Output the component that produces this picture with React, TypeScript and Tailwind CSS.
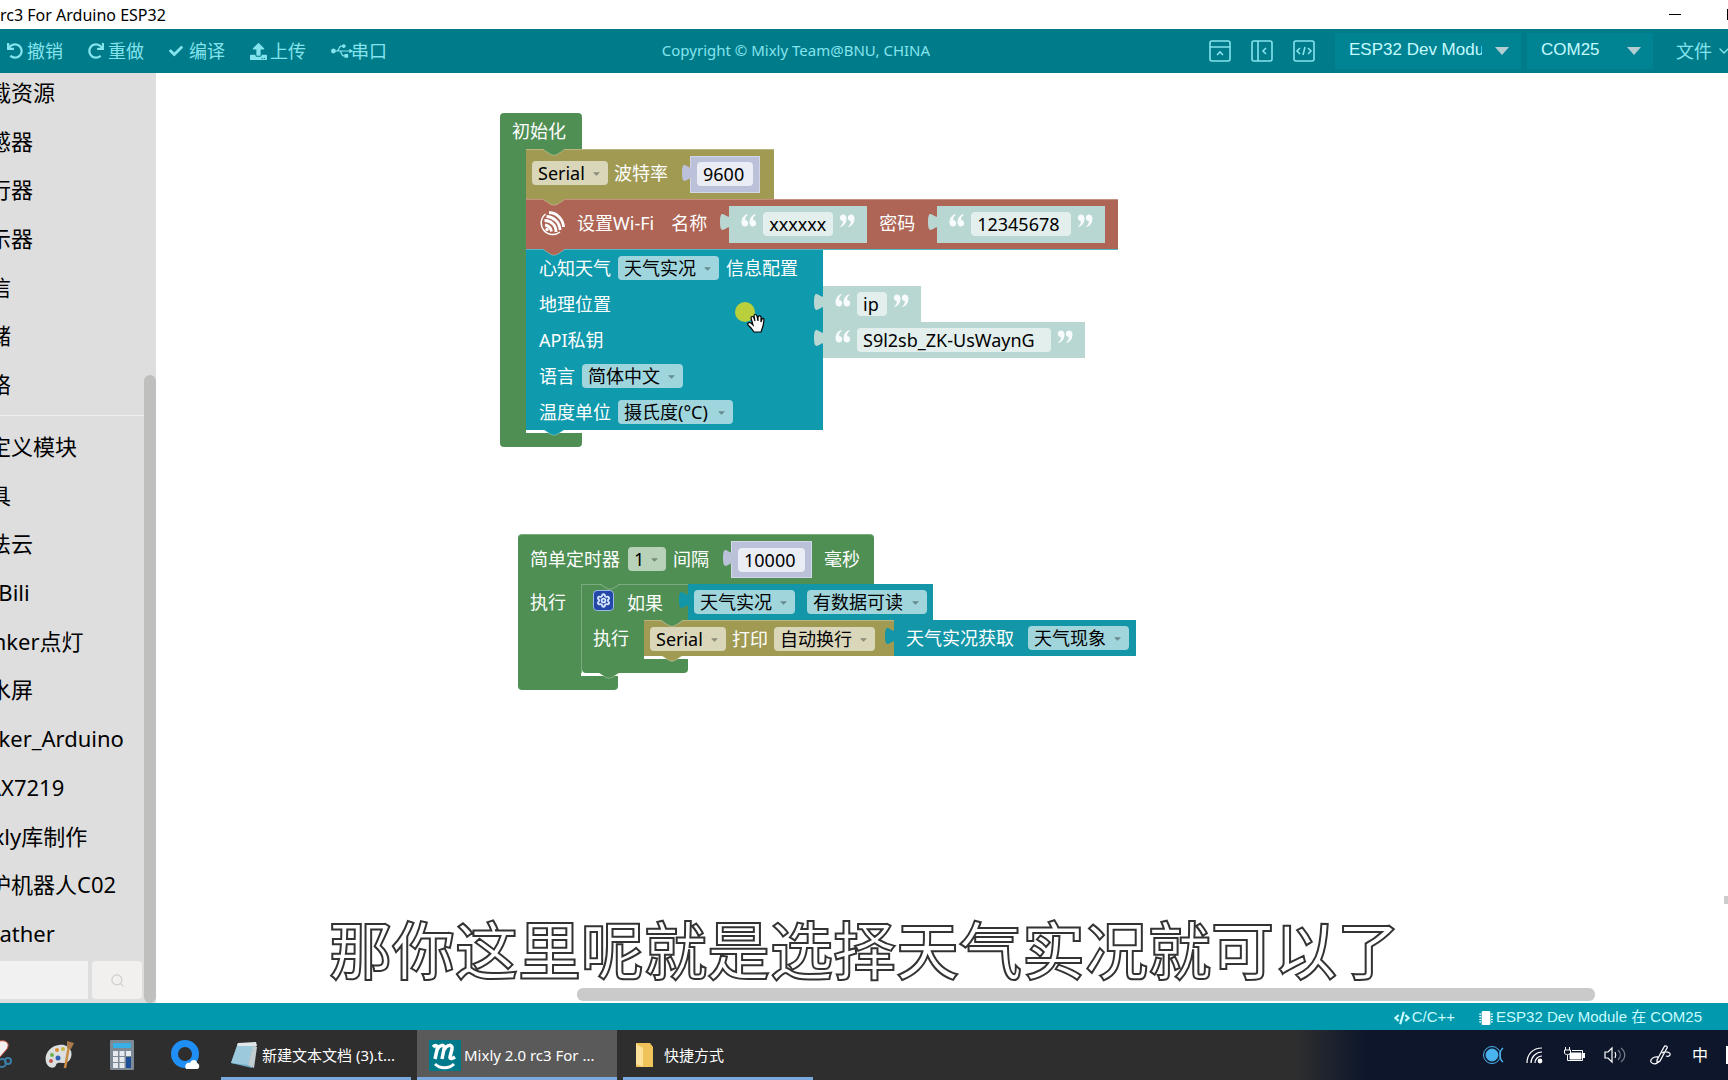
import type { ReactNode } from 'react';
import { FaUndo, FaRedo, FaCheck, FaUpload, FaUsb, FaCaretDown, FaMicrochip, FaCode } from 'react-icons/fa';
import { ChevronDown, Search, Settings } from 'lucide-react';

const toolActions = [
    { label: '撤销', icon: <FaUndo size={16} /> },
    { label: '重做', icon: <FaRedo size={16} /> },
    { label: '编译', icon: <FaCheck size={14} /> },
    { label: '上传', icon: <FaUpload size={17} /> },
    { label: '串口', icon: <FaUsb size={22} /> },
];

const categories = ['下载资源', '传感器', '执行器', '显示器', '通信', '存储', '网络'];

const customCategories = [
    '自定义模块',
    '工具',
    '巴法云',
    'BiliBili',
    'Blinker点灯',
    '墨水屏',
    'Tinker_Arduino',
    'MAX7219',
    'Mixly库制作',
    '守护机器人C02',
    'Weather',
];

export default function App() {
    return (
        <div className="flex h-screen flex-col overflow-hidden bg-white font-['Noto_Sans','Noto_Sans_CJK_SC',sans-serif] text-black">
            <TitleBar />
            <Toolbar />
            <div className="flex min-h-0 flex-1">
                <Sidebar />
                <Workspace />
            </div>
            <StatusBar />
            <Taskbar />
        </div>
    );
}

function TitleBar() {
    return (
        <header className="flex h-[29px] shrink-0 items-center justify-between overflow-hidden">
            <h1 className="text-base">rc3 For Arduino ESP32</h1>
            <div className="flex items-center gap-[46px]">
                <button aria-label="最小化" className="h-px w-3 bg-black" />
                <button aria-label="最大化" className="-mr-[10px] h-[11px] w-[11px] border border-black" />
            </div>
        </header>
    );
}

function Toolbar() {
    return (
        <nav className="flex h-11 shrink-0 items-center overflow-hidden bg-[#007b89] text-[#84e4ee]">
            <div className="flex w-[38.3%] shrink-0 items-center pl-[7px]">
                {toolActions.map((item) => (
                    <button key={item.label} className="flex w-[81px] shrink-0 items-center gap-1 text-lg">
                        <span className="flex w-4 *:shrink-0">{item.icon}</span>
                        <span className="whitespace-nowrap">{item.label}</span>
                    </button>
                ))}
            </div>
            <p className="mb-px text-[15px] whitespace-nowrap">Copyright © Mixly Team@BNU, CHINA</p>
            <div className="flex flex-1 items-center justify-end">
                <div className="mr-5 flex gap-5">
                    <button aria-label="折叠顶部">
                        <PanelIcon>
                            <path d="M1 7h20M8 15l3-3 3 3" />
                        </PanelIcon>
                    </button>
                    <button aria-label="折叠侧栏">
                        <PanelIcon>
                            <path d="M7 1v20M15 8l-3 3 3 3" />
                        </PanelIcon>
                    </button>
                    <button aria-label="查看代码">
                        <PanelIcon>
                            <path d="M7 8l-3 3 3 3M15 8l3 3-3 3M12 7l-2 8" />
                        </PanelIcon>
                    </button>
                </div>
                <ToolSelect label="板卡" value="ESP32 Dev Module" width="w-[186px]" textWidth="w-[147px]" />
                <ToolSelect label="端口" value="COM25" width="w-[126px]" textWidth="w-[90px]" />
                <button className="-mr-1 ml-[17px] flex items-center gap-1 text-lg whitespace-nowrap">
                    文件
                    <ChevronDown size={16} />
                </button>
            </div>
        </nav>
    );
}

function PanelIcon({ children }: { children: ReactNode }) {
    return (
        <svg width="22" height="22" viewBox="0 0 22 22" fill="none" stroke="currentColor" strokeWidth="1.6">
            <rect x="1" y="1" width="20" height="20" rx="2" />
            {children}
        </svg>
    );
}

function ToolSelect({ label, value, width, textWidth }: { label: string; value: string; width: string; textWidth: string }) {
    return (
        <div className={`relative mr-[6px] h-9 shrink-0 bg-[#008494] ${width}`}>
            <select
                aria-label={label}
                className={`h-[34px] appearance-none overflow-hidden pl-[14px] font-['Liberation_Sans',sans-serif] text-[17px] text-clip text-[#c4fbff] ${textWidth}`}
            >
                <option>{value}</option>
            </select>
            <svg className="pointer-events-none absolute top-[14px] right-3" width="14" height="8" viewBox="0 0 14 8">
                <path d="M0 0h14L7 8z" fill="#b4cdd2" />
            </svg>
        </div>
    );
}

function Sidebar() {
    return (
        <aside className="relative flex w-[156px] shrink-0 flex-col overflow-hidden bg-[#dedede]">
            <div className="-mt-[5px] mr-3 flex min-h-0 flex-1 flex-col">
                {categories.map((item) => (
                    <SidebarItem key={item} label={item} />
                ))}
                <hr className="my-[6px] border-[#eeeeee]" />
                {customCategories.map((item) => (
                    <SidebarItem key={item} label={item} />
                ))}
            </div>
            <div className="mt-[3px] mb-1 flex h-[38px] gap-1">
                <input aria-label="搜索模块" className="w-[88px] bg-[#f1f1f1]" />
                <button aria-label="搜索" className="flex w-[50px] items-center justify-center rounded-sm bg-[#f1f0ef] text-[#cfcfcf]">
                    <Search size={15} />
                </button>
            </div>
            <div className="absolute right-0 bottom-0 h-[628px] w-3 rounded-md bg-[#bfbfbd]" />
        </aside>
    );
}

function SidebarItem({ label }: { label: string }) {
    return (
        <button className="-ml-[33px] flex min-h-0 flex-1 items-center text-[22px] whitespace-nowrap">
            {label}
        </button>
    );
}

function Workspace() {
    return (
        <main className="relative min-w-0 flex-1 overflow-hidden text-lg leading-6 text-white">
            <SetupBlock />
            <TimerBlock />

            {/* Mouse pointer */}
            <svg className="absolute top-[228px] left-[578px]" width="36" height="36" viewBox="0 0 36 36">
                <circle cx="11" cy="11" r="10" fill="#b9cf3c" />
                <path
                    d="M20 31l-3-4-3-3c-1-2 1-3 3-2l2 2-2-7c0-2 2-2 3 0l1 3-1-5c0-2 2-2 3 0l1 5 0-4c1-2 3-1 3 0l0 5 1-3c1-1 2-1 2 1l-1 6-2 6z"
                    fill="white"
                    stroke="black"
                    strokeWidth="1.2"
                />
            </svg>

            {/* Subtitle */}
            <p className="absolute bottom-[22px] left-[173px] text-[63px] leading-none font-medium whitespace-nowrap text-white [-webkit-text-stroke:2px_#333333]">
                那你这里呢就是选择天气实况就可以了
            </p>

            <div className="absolute right-[133px] bottom-[2px] left-[421px] h-[13px] rounded-md bg-[#cacaca]" />
            <div className="absolute right-0 bottom-[99px] h-2 w-1 bg-[#cccccc]" />
        </main>
    );
}

/* ---------- Block parts ---------- */

function Notch({ className }: { className: string }) {
    return (
        <svg className={`absolute -top-px left-[18px] z-10 ${className}`} width="20" height="7" viewBox="0 0 20 7">
            <path d="M0 0v1l7 4.500q3 1.500 6 0L20 1V0z" fill="currentColor" />
            <path d="M0 1l7 4.500q3 1.500 6 0L20 1" fill="none" stroke="white" strokeOpacity=".3" />
        </svg>
    );
}

function Value({ children, className }: { children: ReactNode; className: string }) {
    return (
        <div className={`relative flex shrink-0 items-center ${className}`}>
            <svg className="absolute top-[7px] -left-[9px]" width="10" height="18" viewBox="0 0 8 15" preserveAspectRatio="none">
                <path d="M8 0c0 10-8-8-8 7.500s8-2.500 8 7.500z" fill="currentColor" />
            </svg>
            {children}
        </div>
    );
}

function Dropdown({ label, value, width }: { label: string; value: string; width: string }) {
    return (
        <span className={`relative flex h-6 shrink-0 text-black ${width}`}>
            <select aria-label={label} className="h-6 w-full appearance-none rounded bg-white/60 pl-[6px] leading-6">
                <option>{value}</option>
            </select>
            <FaCaretDown className="pointer-events-none absolute top-[7px] right-[6px] text-black/35" size={11} />
        </span>
    );
}

function NumberValue({ label, value, width }: { label: string; value: string; width: string }) {
    return (
        <Value className="mt-[2px] h-[37px] border border-[#d3d6e6] bg-[#bcc1da] px-[6px] text-[#bcc1da]">
            <input aria-label={label} defaultValue={value} className={`h-6 rounded bg-white/70 pl-[6px] text-black ${width}`} />
        </Value>
    );
}

function StringValue({ label, value, width, size }: { label: string; value: string; width: string; size: string }) {
    return (
        <Value className={`gap-[6px] bg-[#b8d6d2] px-3 text-[#b8d6d2] ${size}`}>
            <QuoteMark />
            <input aria-label={label} defaultValue={value} className={`h-6 rounded bg-white/60 pl-[6px] text-black ${width}`} />
            <QuoteMark closing />
        </Value>
    );
}

function QuoteMark({ closing }: { closing?: boolean }) {
    return (
        <svg className={`mb-2 shrink-0 ${closing ? 'rotate-180' : ''}`} width="16" height="13" viewBox="0 0 16 13" fill="white" fillOpacity=".9">
            <path d="M6.500 0C3 1 .5 4 .5 8.500.5 11 2 12.500 4 12.500s3.200-1.400 3.200-3.200S6 6.200 4.200 6.100C4 4 5 2 6.800.8z" />
            <path d="M14.500 0C11 1 8.500 4 8.500 8.500c0 2.500 1.500 4 3.500 4s3.200-1.400 3.200-3.200S14 6.200 12.200 6.100C12 4 13 2 14.800.8z" />
        </svg>
    );
}

// Closing arm of a C-shaped block, with the slit below the last nested block
function BlockFoot({ arm, foot, notch }: { arm: string; foot: string; notch: string }) {
    return (
        <div>
            <div className="flex h-[3px]">
                <div className={`bg-[#4f8f54] ${arm}`} />
                <div className="relative flex-1">
                    <Notch className={notch} />
                </div>
            </div>
            <div className={`h-[14px] rounded-b-sm bg-[#4f8f54] ${foot}`} />
        </div>
    );
}

/* ---------- Stacks on the canvas ---------- */

function SetupBlock() {
    return (
        <section className="absolute top-10 left-[344px]">
            <div className="flex h-9 w-[82px] items-center rounded-t-sm bg-[#4f8f54] pl-3">初始化</div>
            <div className="flex">
                <div className="w-[26px] bg-[#4f8f54]" />
                <div>
                    <div className="relative flex h-[50px] w-[248px] items-center border-t border-[#bab57f] bg-[#a19a53] pb-[3px] pl-[6px]">
                        <Notch className="text-[#4f8f54]" />
                        <Dropdown label="串口" value="Serial" width="w-[76px]" />
                        <span className="mr-[22px] ml-[6px]">波特率</span>
                        <NumberValue label="波特率" value="9600" width="w-14" />
                    </div>
                    <div className="relative flex h-[50px] w-[592px] items-center border-t border-[#c98f83] bg-[#ae6555] pb-[3px] pl-[14px]">
                        <Notch className="text-[#a19a53]" />
                        <EspressifLogo />
                        <span className="ml-3">设置Wi-Fi</span>
                        <span className="mr-[22px] ml-[17px]">名称</span>
                        <StringValue label="名称" value="xxxxxx" width="w-[70px]" size="mt-[2px] h-[37px]" />
                        <span className="mr-[22px] ml-3">密码</span>
                        <StringValue label="密码" value="12345678" width="w-[100px]" size="mt-[2px] h-[37px]" />
                    </div>
                    <div className="relative border-t border-[#57b8c5]">
                        <Notch className="text-[#ae6555]" />
                        <WeatherRow>
                            心知天气
                            <Dropdown label="天气类型" value="天气实况" width="w-[101px]" />
                            信息配置
                        </WeatherRow>
                        <WeatherRow value={<StringValue label="地理位置" value="ip" width="w-[30px]" size="h-9" />}>地理位置</WeatherRow>
                        <WeatherRow value={<StringValue label="API私钥" value="S9l2sb_ZK-UsWaynG" width="w-[194px]" size="h-9" />}>
                            API私钥
                        </WeatherRow>
                        <WeatherRow>
                            语言
                            <Dropdown label="语言" value="简体中文" width="w-[101px]" />
                        </WeatherRow>
                        <WeatherRow>
                            温度单位
                            <Dropdown label="温度单位" value="摄氏度(°C)" width="w-[115px]" />
                        </WeatherRow>
                    </div>
                </div>
            </div>
            <BlockFoot arm="w-[26px]" foot="w-[82px]" notch="text-[#109aad]" />
        </section>
    );
}

function WeatherRow({ children, value }: { children: ReactNode; value?: ReactNode }) {
    return (
        <div className="flex h-9">
            <div className="flex w-[297px] shrink-0 items-center gap-[7px] bg-[#109aad] pl-[13px]">{children}</div>
            {value}
        </div>
    );
}

function TimerBlock() {
    return (
        <section className="absolute top-[461px] left-[362px]">
            <div className="flex h-[50px] w-[356px] items-center rounded-t-sm border-t border-[#7aab7e] bg-[#4f8f54] pb-[2px] pl-3">
                简单定时器
                <span className="mr-[7px] ml-2">
                    <Dropdown label="定时器" value="1" width="w-[38px]" />
                </span>
                间隔
                <span className="mr-3 ml-[22px]">
                    <NumberValue label="间隔" value="10000" width="w-[67px]" />
                </span>
                毫秒
            </div>
            <div className="flex">
                <div className="w-[63px] bg-[#4f8f54] pt-[6px] pl-3">执行</div>
                <div className="border-l border-[#7aab7e]">
                    <div className="relative flex h-9">
                        <Notch className="text-[#4f8f54]" />
                        <div className="flex w-[106px] items-center border-t border-[#7aab7e] bg-[#4f8f54] pl-[11px]">
                            <button
                                aria-label="设置"
                                className="mr-[13px] mb-1 flex size-[21px] items-center justify-center rounded border border-[#9db8e8] bg-[#2448a8] text-[#d5e4ff]"
                            >
                                <Settings size={15} strokeWidth={3} />
                            </button>
                            如果
                        </div>
                        <Value className="h-9 gap-3 bg-[#1296a8] px-[6px] text-[#1296a8]">
                            <Dropdown label="天气类型" value="天气实况" width="w-[101px]" />
                            <Dropdown label="状态" value="有数据可读" width="w-[120px]" />
                        </Value>
                    </div>
                    <div className="flex h-9">
                        <div className="flex w-[62px] items-center bg-[#4f8f54] pl-[11px]">执行</div>
                        <div className="relative flex w-[250px] items-center gap-[6px] border-t border-[#bab57f] bg-[#a19a53] pl-[6px]">
                            <Notch className="text-[#4f8f54]" />
                            <Dropdown label="串口" value="Serial" width="w-[76px]" />
                            打印
                            <Dropdown label="换行" value="自动换行" width="w-[101px]" />
                        </div>
                        <Value className="h-9 gap-[14px] bg-[#1296a8] pr-[7px] pl-3 text-[#1296a8]">
                            <span className="text-white">天气实况获取</span>
                            <Dropdown label="天气数据" value="天气现象" width="w-[101px]" />
                        </Value>
                    </div>
                    <BlockFoot arm="w-[62px]" foot="w-[106px]" notch="text-[#a19a53]" />
                </div>
            </div>
            <BlockFoot arm="w-[63px]" foot="w-[100px]" notch="text-[#4f8f54]" />
        </section>
    );
}

function EspressifLogo() {
    return (
        <svg className="shrink-0" width="25" height="26" viewBox="0 0 25 26" fill="none" stroke="white" strokeWidth="2.800">
            <path d="M5.500 4A11 11 0 1 0 20 22" strokeWidth="1.500" />
            <path d="M9 2.500A15 15 0 0 1 23.500 17" />
            <path d="M6.500 6.500A14 14 0 0 1 20 20" />
            <path d="M4.500 10.500A11 11 0 0 1 16 22" />
            <path d="M5 15A8 8 0 0 1 11.500 21.500" />
            <circle cx="7" cy="19.500" r="1.700" fill="white" stroke="none" />
        </svg>
    );
}

/* ---------- Bottom bars ---------- */

function StatusBar() {
    return (
        <footer className="flex h-[27px] shrink-0 items-center justify-end gap-6 bg-[#0099ad] pt-[2px] pr-[26px] font-['Liberation_Sans','Noto_Sans_CJK_SC',sans-serif] text-[15px] text-[#c9fbff]">
            <span className="flex items-center gap-[2px]">
                <FaCode size={16} />
                C/C++
            </span>
            <span className="flex items-center gap-[3px]">
                <FaMicrochip size={14} className="text-white" />
                ESP32 Dev Module 在 COM25
            </span>
        </footer>
    );
}

function Taskbar() {
    return (
        <footer className="flex h-[50px] shrink-0 justify-between overflow-hidden bg-linear-to-r from-[#2e2e2e] from-75% to-[#0d162b] to-79% text-[15px] text-white">
            <div className="flex">
                <div className="flex items-center">
                    <button aria-label="截图工具" className="w-[29px] overflow-hidden">
                        <svg width="12" height="32" viewBox="0 0 12 32" fill="none">
                            <path d="M-6 4C4-1 11 3 7 10L0 18z" fill="#f1efef" stroke="#c8503f" />
                            <circle cx="2" cy="24" r="4" stroke="#3a7fa8" strokeWidth="2" />
                            <circle cx="8" cy="22" r="3" stroke="#3a7fa8" strokeWidth="2" />
                        </svg>
                    </button>
                    <button aria-label="画图" className="flex w-[62px] justify-center">
                        <svg width="30" height="30" viewBox="0 0 30 30">
                            <path d="M14 5C5 6-1 14 1 22c2 7 9 7 10 3 1-3 4-2 6-2 7 1 11-6 9-12-2-5-7-7-12-6z" fill="#dcdfe0" />
                            <circle cx="7" cy="15" r="2" fill="#6fae4a" />
                            <circle cx="12" cy="10" r="2" fill="#d98b35" />
                            <circle cx="18" cy="9" r="2" fill="#c8b640" />
                            <circle cx="13" cy="18" r="2.500" fill="#2f62b5" />
                            <circle cx="6" cy="21" r="2" fill="#c4574d" />
                            <path d="M24 6l-4 22" stroke="#c98b45" strokeWidth="2.500" />
                            <path d="M22 1l7 2-3 6-4-1z" fill="#a9784b" />
                        </svg>
                    </button>
                    <button aria-label="计算器" className="flex w-[62px] justify-center">
                        <svg width="24" height="30" viewBox="0 0 24 30">
                            <rect width="24" height="30" rx="1" fill="#7d8a96" />
                            <rect x="3" y="3" width="18" height="5" fill="#38b0e6" />
                            <path d="M3 11h5v5H3zM9.500 11h5v5h-5zM16 11h5v5h-5zM3 17h5v5H3zM9.500 17h5v5h-5zM3 23h5v5H3zM9.500 23h5v5h-5z" fill="#e6eaee" />
                            <path d="M16 17h5v11h-5z" fill="#1d4f99" />
                        </svg>
                    </button>
                    <button aria-label="浏览器" className="flex w-16 justify-center">
                        <svg width="30" height="30" viewBox="0 0 30 30">
                            <circle cx="15" cy="14" r="10.500" fill="none" stroke="#1f8ff5" strokeWidth="7" />
                            <path d="M16 29c-2-4 1-7 4-6 1-4 7-4 7 0 3 1 3 6 0 6z" fill="white" />
                        </svg>
                    </button>
                </div>
                <div className="ml-1 flex gap-[6px]">
                    <button className="flex w-[190px] items-center gap-1 border-b-[3px] border-[#79a9dd] pt-[3px] pl-2">
                        <svg width="29" height="28" viewBox="0 0 29 28">
                            <path d="M9 2l18 1-4 24L2 22z" fill="#6fa9c4" />
                            <path d="M9 2l15 2-5 20L2 22z" fill="#9cc9dc" />
                            <path d="M9 2l18-1 1 4-20 0z" fill="#e2e6e8" />
                            <path d="M24 4l4 2-3 21-6-3z" fill="#c2cdd2" />
                        </svg>
                        <span className="whitespace-nowrap">新建文本文档 (3).t...</span>
                    </button>
                    <button className="flex w-[200px] items-center gap-[3px] border-b-[3px] border-[#79a9dd] bg-[#5a5a5a] pt-[3px] pl-3">
                        <svg width="32" height="31" viewBox="0 0 32 31" fill="none" stroke="white">
                            <rect width="32" height="31" fill="#00798b" stroke="none" />
                            <path d="M4 7c3-3 5-1 4 3L6 19M8 10c3-6 8-6 7-1l-2 10M15 10c3-6 9-6 8-1l-2 8c0 2 2 2 5 0" strokeWidth="3.500" />
                            <path d="M6 24c5 5 14 5 19 0" strokeWidth="3" />
                        </svg>
                        <span className="whitespace-nowrap">Mixly 2.0 rc3 For ...</span>
                    </button>
                    <button className="flex w-[190px] items-center gap-[9px] border-b-[3px] border-[#79a9dd] pt-[3px] pl-3">
                        <svg width="20" height="26" viewBox="0 0 20 26">
                            <path d="M1 1h14l3 4v20H1z" fill="#f0c35a" />
                            <path d="M1 2l7 4v19l-7-3z" fill="#fbe09a" />
                        </svg>
                        <span className="whitespace-nowrap">快捷方式</span>
                    </button>
                </div>
            </div>
            <div className="flex items-center">
                <svg className="mr-[22px]" width="21" height="20" viewBox="0 0 21 20" fill="none" stroke="#4ab4f0">
                    <circle cx="9" cy="10" r="8.500" />
                    <circle cx="9" cy="10" r="6" fill="#4ab4f0" />
                    <path d="M20 3c-4 3-4 11 0 14" strokeWidth="1.500" />
                </svg>
                <svg className="mr-[21px]" width="17" height="18" viewBox="0 0 17 18" fill="none" stroke="white" strokeWidth="1.200">
                    <path d="M1 17C1 8 7 2 16 2M5 17c0-6 5-11 11-11M9 17c0-4 3-7 7-7" />
                    <circle cx="14" cy="15" r="1.800" fill="white" />
                </svg>
                <svg className="mr-[19px]" width="21" height="16" viewBox="0 0 21 16" fill="none" stroke="white">
                    <path d="M1.500 0v3M5.500 0v3M.5 3h6v3c0 2-6 2-6 0zM3.500 8v5.500h15v-10H8" />
                    <path d="M6 6h11v6H6z" fill="white" />
                    <path d="M20 6v5" strokeWidth="2" />
                </svg>
                <svg className="mr-6" width="22" height="18" viewBox="0 0 22 18" fill="none" stroke="white" strokeWidth="1.200">
                    <path d="M1 6h3l4-4v14l-4-4H1zM11 6c1 2 1 4 0 6" />
                    <path d="M14 4c3 3 3 7 0 10M17 2c5 4 5 10 0 14" strokeOpacity=".45" />
                </svg>
                <svg className="mr-[21px]" width="21" height="20" viewBox="0 0 21 20" fill="none" stroke="white" strokeWidth="1.300">
                    <path d="M7 15L14 2c1-2 4-1 3 1l-7 13-3 2zM12 8c3-2 9-1 8 2-1 2-4 1-4 1M8 12c-5-1-8 3-7 5 2 3 7 2 8-1" />
                </svg>
                <span className="mr-[18px] text-base">中</span>
                <span className="h-[18px] w-[2px] bg-white" />
            </div>
        </footer>
    );
}
